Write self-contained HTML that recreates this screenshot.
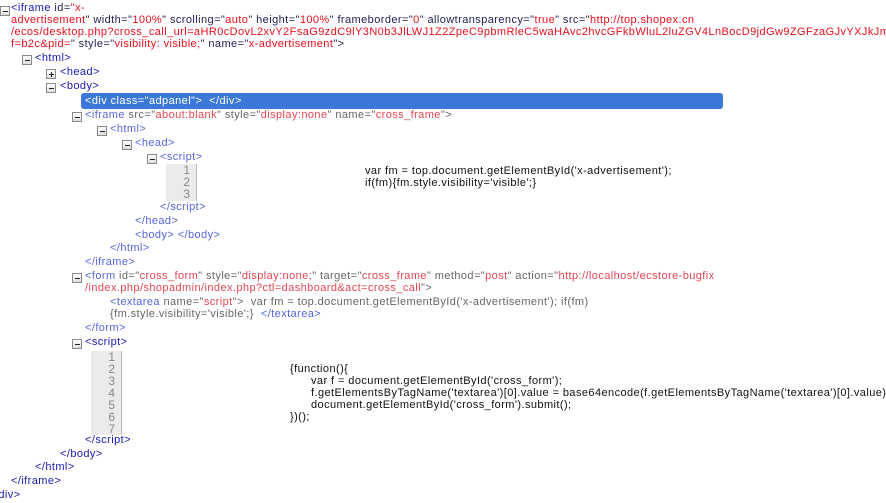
<!DOCTYPE html>
<html><head><meta charset="utf-8">
<style>
html,body{margin:0;padding:0;background:#fff;width:886px;height:503px;overflow:hidden;}
body{font-family:"Liberation Sans",sans-serif;font-size:11px;letter-spacing:0.42px;position:relative;}
.l{position:absolute;white-space:nowrap;line-height:12px;}
.t{color:#1a1ab0}.a{color:#222255}.v{color:#e8101c}
.it{color:#5566dd}.ia{color:#666}.iv{color:#e04850}
.c{color:#111}
.bx{position:absolute;width:8px;height:8px;border:1px solid #8a8a8a;background:linear-gradient(#fff,#ddd);}
.bx:after{content:"";position:absolute;left:2px;top:4px;width:5px;height:1px;background:#222;}
.pl:before{content:"";position:absolute;left:4px;top:2px;width:1px;height:5px;background:#222;}
.g{position:absolute;background:#ebebeb;border-right:1px solid #bbb;color:#888;text-align:right;line-height:12px;font-size:12px;padding-right:6px;box-sizing:border-box;letter-spacing:0;}
.hl{position:absolute;left:81px;top:93px;width:642px;height:16px;background:#3b78d8;border-radius:3px;}
</style></head><body>
<div class="bx" style="left:0;top:6px"></div>
<div class="l" style="left:11px;top:2px"><span class="t">&lt;iframe</span> <span class="a">id=</span><span class="v">"x-</span></div>
<div class="l" style="left:11px;top:14px"><span class="v">advertisement</span><span class="a">" width="</span><span class="v">100%</span><span class="a">" scrolling="</span><span class="v">auto</span><span class="a">" height="</span><span class="v">100%</span><span class="a">" frameborder="</span><span class="v">0</span><span class="a">" allowtransparency="</span><span class="v">true</span><span class="a">" src="</span><span class="v">http://top.shopex.cn</span></div>
<div class="l" style="left:11px;top:26px"><span class="v">/ecos/desktop.php?cross_call_url=aHR0cDovL2xvY2FsaG9zdC9lY3N0b3JlLWJ1Z2ZpeC9pbmRleC5waHAvc2hvcGFkbWluL2luZGV4LnBocD9jdGw9ZGFzaGJvYXJkJmFjdD</span></div>
<div class="l" style="left:11px;top:38px"><span class="v">f=b2c&amp;pid=</span><span class="a">" style="</span><span class="v">visibility: visible;</span><span class="a">" name="</span><span class="v">x-advertisement</span><span class="a">"&gt;</span></div>
<div class="bx" style="left:22px;top:55px"></div>
<div class="l t" style="left:35px;top:52px">&lt;html&gt;</div>
<div class="bx pl" style="left:46px;top:69px"></div>
<div class="l t" style="left:60px;top:66px">&lt;head&gt;</div>
<div class="bx" style="left:46px;top:83px"></div>
<div class="l t" style="left:60px;top:80px">&lt;body&gt;</div>
<div class="hl"></div>
<div class="l" style="left:85px;top:95px;color:#fff">&lt;div class="adpanel"&gt;&nbsp; &lt;/div&gt;</div>
<div class="bx" style="left:72px;top:112px"></div>
<div class="l" style="left:85px;top:109px"><span class="it">&lt;iframe</span> <span class="ia">src="</span><span class="iv">about:blank</span><span class="ia">" style="</span><span class="iv">display:none</span><span class="ia">" name="</span><span class="iv">cross_frame</span><span class="ia">"&gt;</span></div>
<div class="bx" style="left:97px;top:126px"></div>
<div class="l it" style="left:110px;top:123px">&lt;html&gt;</div>
<div class="bx" style="left:122px;top:140px"></div>
<div class="l it" style="left:135px;top:137px">&lt;head&gt;</div>
<div class="bx" style="left:147px;top:154px"></div>
<div class="l it" style="left:160px;top:151px">&lt;script&gt;</div>
<div class="g" style="left:166px;top:164px;width:31px;height:37px">1<br>2<br>3</div>
<div class="l c" style="left:365px;top:165px;line-height:12px">var fm = top.document.getElementById('x-advertisement');<br>if(fm){fm.style.visibility='visible';}</div>
<div class="l it" style="left:160px;top:201px">&lt;/script&gt;</div>
<div class="l it" style="left:135px;top:215px">&lt;/head&gt;</div>
<div class="l it" style="left:135px;top:229px">&lt;body&gt; &lt;/body&gt;</div>
<div class="l it" style="left:110px;top:242px">&lt;/html&gt;</div>
<div class="l it" style="left:85px;top:256px">&lt;/iframe&gt;</div>
<div class="bx" style="left:72px;top:273px"></div>
<div class="l" style="left:85px;top:270px"><span class="it">&lt;form</span> <span class="ia">id="</span><span class="iv">cross_form</span><span class="ia">" style="</span><span class="iv">display:none;</span><span class="ia">" target="</span><span class="iv">cross_frame</span><span class="ia">" method="</span><span class="iv">post</span><span class="ia">" action="</span><span class="iv">http://localhost/ecstore-bugfix</span></div>
<div class="l" style="left:85px;top:282px"><span class="iv">/index.php/shopadmin/index.php?ctl=dashboard&amp;act=cross_call</span><span class="ia">"&gt;</span></div>
<div class="l" style="left:110px;top:296px"><span class="it">&lt;textarea</span> <span class="ia">name="</span><span class="iv">script</span><span class="ia">"&gt;&nbsp; var fm = top.document.getElementById('x-advertisement'); if(fm)</span></div>
<div class="l" style="left:110px;top:308px"><span class="ia">{fm.style.visibility='visible';}&nbsp; </span><span class="it">&lt;/textarea&gt;</span></div>
<div class="l it" style="left:85px;top:322px">&lt;/form&gt;</div>
<div class="bx" style="left:72px;top:339px"></div>
<div class="l t" style="left:85px;top:336px">&lt;script&gt;</div>
<div class="g" style="left:91px;top:351px;width:31px;height:84px">1<br>2<br>3<br>4<br>5<br>6<br>7</div>
<div class="l c" style="left:290px;top:363px">{function(){</div>
<div class="l c" style="left:311px;top:375px">var f = document.getElementById('cross_form');</div>
<div class="l c" style="left:311px;top:387px">f.getElementsByTagName('textarea')[0].value = base64encode(f.getElementsByTagName('textarea')[0].value);</div>
<div class="l c" style="left:311px;top:399px">document.getElementById('cross_form').submit();</div>
<div class="l c" style="left:290px;top:411px">})();</div>
<div class="l t" style="left:85px;top:434px">&lt;/script&gt;</div>
<div class="l t" style="left:60px;top:448px">&lt;/body&gt;</div>
<div class="l t" style="left:35px;top:461px">&lt;/html&gt;</div>
<div class="l t" style="left:11px;top:475px">&lt;/iframe&gt;</div>
<div class="l t" style="left:-12px;top:489px">&lt;/div&gt;</div>
</body></html>
